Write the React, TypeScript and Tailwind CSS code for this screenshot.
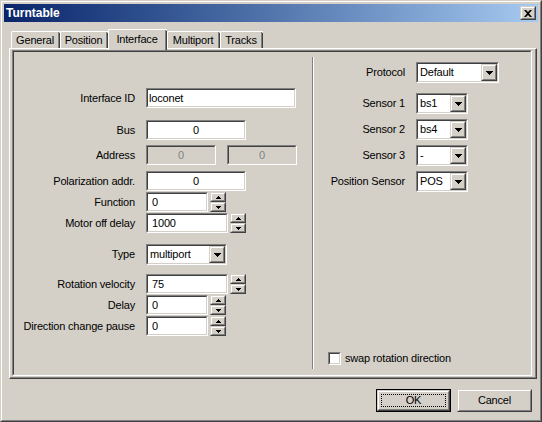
import React from 'react'

const sunk = 'border border-t-[#808080] border-l-[#808080] border-b-white border-r-white'
const sunkIn = 'border border-t-[#404040] border-l-[#404040] border-b-[#d4d0c8] border-r-[#d4d0c8]'
const raise = 'border border-t-[#d4d0c8] border-l-[#d4d0c8] border-b-[#404040] border-r-[#404040]'
const raiseIn = 'border border-t-white border-l-white border-b-[#808080] border-r-[#808080] bg-[#d4d0c8]'

function Edit({ className = '', value, center, disabled, pad = 'pl-[3px]' }: { className?: string; value: string; center?: boolean; disabled?: boolean; pad?: string }) {
  return (
    <div className={`${sunk} h-[20px] ${className}`}>
      <div className={`${sunkIn} h-full flex items-center ${center ? 'justify-center' : pad} ${disabled ? 'bg-[#d4d0c8] text-[#808080]' : 'bg-white'}`}>
        {value}
      </div>
    </div>
  )
}

function SpinArrow({ up }: { up?: boolean }) {
  return (
    <svg width="5" height="3" viewBox="0 0 5 3">
      <path d={up ? 'M2 0h1v1h1v1h1v1H0V2h1V1h1z' : 'M0 0h5v1H4v1H3v1H2V2H1V1H0z'} fill="#000" />
    </svg>
  )
}

function SpinBtn({ up }: { up?: boolean }) {
  return (
    <div className={`${raise} h-[10px]`}>
      <div className={`${raiseIn} h-full flex items-center justify-center`}>
        <SpinArrow up={up} />
      </div>
    </div>
  )
}

function Spin({ className, value }: { className: string; value: string }) {
  return (
    <div className="flex gap-[2px]">
      <Edit className={className} value={value} pad="pl-[4px]" />
      <div className="w-[16px] flex flex-col">
        <SpinBtn up />
        <SpinBtn />
      </div>
    </div>
  )
}

function Combo({ className, value }: { className: string; value: string }) {
  return (
    <div className={`${sunk} h-[21px] ${className}`}>
      <div className={`${sunkIn} h-full flex bg-white`}>
        <div className="flex-1 flex items-center pl-[2px]">{value}</div>
        <div className={`${raise} w-[16px] h-full`}>
          <div className={`${raiseIn} h-full flex items-center justify-center`}>
            <svg width="7" height="4" viewBox="0 0 7 4">
              <path d="M0 0h7v1H6v1H5v1H4v1H3V3H2V2H1V1H0z" fill="#000" />
            </svg>
          </div>
        </div>
      </div>
    </div>
  )
}

function Row({ label, children, labelW, className = '' }: { label: string; children: React.ReactNode; labelW: string; className?: string }) {
  return (
    <div className={`flex items-center gap-[11px] ${className}`}>
      <div className={`${labelW} text-right whitespace-nowrap`}>{label}</div>
      {children}
    </div>
  )
}

const tabs = [
  { name: 'General', w: 'w-[49px]' },
  { name: 'Position', w: 'w-[48px]' },
  { name: 'Interface', w: 'w-[59px]', active: true },
  { name: 'Multiport', w: 'w-[53px]' },
  { name: 'Tracks', w: 'w-[43px]' },
]

export default function App() {
  const L = 'w-[121px]'
  const R = 'w-[91px]'
  return (
    <div className="w-[542px] h-[422px] bg-[#d4d0c8] font-['Liberation_Sans',Arial,sans-serif] text-[11px] tracking-[-0.18px] text-black leading-none">
      <div className={`${raise} w-full h-full`}>
        <div className="border border-t-white border-l-white border-b-[#808080] border-r-[#808080] h-full p-[2px] flex flex-col">
          {/* title bar */}
          <div className="h-[18px] bg-linear-to-r from-[#0a246a] to-[#a6caf0] flex items-center justify-between pl-[2px] pr-[2px]">
            <span className="text-white font-bold text-[12px] tracking-normal">Turntable</span>
            <div className={`${raise} w-[16px] h-[14px]`}>
              <div className={`${raiseIn} h-full flex items-center justify-center`}>
                <svg width="8" height="7" viewBox="0 0 8 7">
                  <path d="M0 0h2l2 2 2-2h2L5 3.5 8 7H6L4 5 2 7H0l3-3.5z" fill="#000" />
                </svg>
              </div>
            </div>
          </div>

          {/* tabs */}
          <div className="mt-[7px] ml-[5px] w-[528px]">
            <div className="flex items-end h-[19px] pl-[2px]">
              {tabs.map((t) =>
                t.active ? (
                  <div key={t.name} className={`${t.w} h-[21px] -mb-[2px] relative z-10 bg-[#d4d0c8] border-t border-l border-white rounded-tl-[2px] flex`}>
                    <div className="flex-1 flex items-start justify-center pt-[4px] border-r border-[#808080]">{t.name}</div>
                    <div className="w-px bg-[#404040] mt-[1px]" />
                  </div>
                ) : (
                  <div key={t.name} className={`${t.w} h-[17px] border-t border-l border-white rounded-tl-[2px] flex`}>
                    <div className="flex-1 flex items-center justify-center pt-[1px] border-r border-[#808080]">{t.name}</div>
                    <div className="w-px bg-[#404040] mt-[1px]" />
                  </div>
                )
              )}
            </div>

            {/* tab panel */}
            <div className="h-[331px] border-t border-l border-white border-b border-r border-b-[#404040] border-r-[#404040]">
              <div className="h-full border-b border-r border-[#808080] pt-[1px] pl-[2px] pr-[3px]">
                <div className={`${sunk} h-[326px]`}>
                  <div className={`${sunkIn} h-full flex`}>
                    {/* left column */}
                    <div className="w-[298px] pt-[36px] flex flex-col">
                      <Row label="Interface ID" labelW={L}>
                        <Edit className="w-[150px]" value="loconet" pad="pl-[1px]" />
                      </Row>
                      <Row label="Bus" labelW={L} className="mt-[12px]">
                        <Edit className="w-[100px]" value="0" center />
                      </Row>
                      <Row label="Address" labelW={L} className="mt-[5px]">
                        <Edit className="w-[70px]" value="0" center disabled />
                        <Edit className="w-[70px]" value="0" center disabled />
                      </Row>
                      <Row label="Polarization addr." labelW={L} className="mt-[6px]">
                        <Edit className="w-[100px]" value="0" center />
                      </Row>
                      <Row label="Function" labelW={L} className="mt-[1px]">
                        <Spin className="w-[62px]" value="0" />
                      </Row>
                      <Row label="Motor off delay" labelW={L} className="mt-[1px]">
                        <Spin className="w-[82px]" value="1000" />
                      </Row>
                      <Row label="Type" labelW={L} className="mt-[11px]">
                        <Combo className="w-[81px]" value="multiport" />
                      </Row>
                      <Row label="Rotation velocity" labelW={L} className="mt-[9px]">
                        <Spin className="w-[82px]" value="75" />
                      </Row>
                      <Row label="Delay" labelW={L} className="mt-[1px]">
                        <Spin className="w-[62px]" value="0" />
                      </Row>
                      <Row label="Direction change pause" labelW={L} className="mt-[1px]">
                        <Spin className="w-[62px]" value="0" />
                      </Row>
                    </div>

                    {/* separator */}
                    <div className="my-[5px] w-[2px] flex">
                      <div className="w-px bg-[#808080]" />
                      <div className="w-px bg-white" />
                    </div>

                    {/* right column */}
                    <div className="flex-1 pt-[10px] pb-[9px] flex flex-col">
                      <Row label="Protocol" labelW={R}>
                        <Combo className="w-[83px]" value="Default" />
                      </Row>
                      <Row label="Sensor 1" labelW={R} className="mt-[10px]">
                        <Combo className="w-[52px]" value="bs1" />
                      </Row>
                      <Row label="Sensor 2" labelW={R} className="mt-[5px]">
                        <Combo className="w-[52px]" value="bs4" />
                      </Row>
                      <Row label="Sensor 3" labelW={R} className="mt-[5px]">
                        <Combo className="w-[52px]" value="-" />
                      </Row>
                      <Row label="Position Sensor" labelW={R} className="mt-[5px]">
                        <Combo className="w-[52px]" value="POS" />
                      </Row>
                      <div className="flex-1" />
                      <label className="flex items-center gap-[4px] pl-[14px]">
                        <div className={`${sunk} w-[13px] h-[13px]`}>
                          <div className={`${sunkIn} h-full bg-white`} />
                        </div>
                        <span>swap rotation direction</span>
                      </label>
                    </div>
                  </div>
                </div>
              </div>
            </div>
          </div>

          {/* buttons */}
          <div className="mt-[10px] flex justify-end gap-[6px] pr-[6px]">
            <div className="w-[75px] h-[23px] border border-black">
              <div className={`${raise} h-full`}>
                <div className={`${raiseIn} h-full p-[2px]`}>
                  <div className="h-full border border-dotted border-black flex items-center justify-center">OK</div>
                </div>
              </div>
            </div>
            <div className={`${raise} w-[75px] h-[23px]`}>
              <div className={`${raiseIn} h-full flex items-center justify-center`}>Cancel</div>
            </div>
          </div>
        </div>
      </div>
    </div>
  )
}
